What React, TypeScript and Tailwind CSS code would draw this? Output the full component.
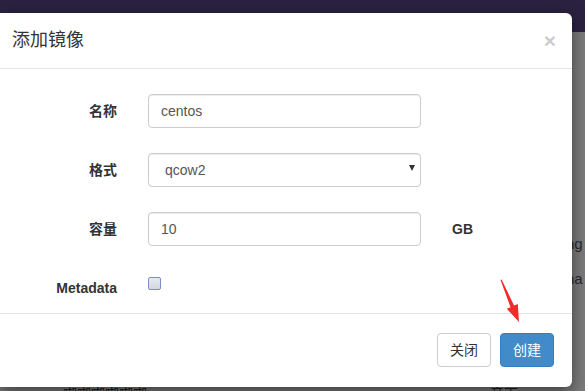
import { useState } from 'react';

const cjk = '"Liberation Sans", "Noto Sans CJK SC", sans-serif';

export default function App() {
  const [name, setName] = useState('centos');
  const [format, setFormat] = useState('qcow2');
  const [size, setSize] = useState('10');
  const [meta, setMeta] = useState(false);

  return (
    <div className="relative h-[391px] w-[585px] overflow-hidden bg-[#7b7b7b]" style={{ fontFamily: cjk }}>
      {/* page behind the backdrop */}
      <div className="h-[32px] bg-[#2a2240]" />
      <span className="absolute left-[566px] top-[233px] text-[15px] text-[#2a2a2a]">ng</span>
      <span className="absolute left-[566px] top-[268px] text-[15px] text-[#2a2a2a]">na</span>
      <span className="absolute left-[63px] top-[384px] text-[14px] text-[#1e1e1e]">嘲嘲嘲嘲嘲嘲</span>
      <span className="absolute left-[490px] top-[384px] text-[14px] text-[#1e1e1e]">音面</span>

      {/* dialog */}
      <div className="absolute left-0 top-[13px] flex h-[374px] w-[572px] flex-col rounded-r-md bg-white shadow-[0_5px_15px_rgba(0,0,0,0.5)]">
        <div className="flex h-[56px] items-center justify-between border-b border-[#e5e5e5] pl-[12px] pr-[16px]">
          <h4 className="text-[18px] font-normal text-[#333]">添加镜像</h4>
          <button className="text-[21px] font-bold leading-none text-black opacity-20">×</button>
        </div>

        <div className="flex flex-1 flex-col gap-[25px] pt-[25px] text-[14px]">
          <div className="flex h-[34px] items-center">
            <label className="w-[117px] text-right font-bold text-[#333]">名称</label>
            <input
              value={name}
              onChange={(e) => setName(e.target.value)}
              className="ml-[31px] h-[34px] w-[273px] rounded border border-[#ccc] px-[12px] text-[14px] text-[#555] shadow-[inset_0_1px_1px_rgba(0,0,0,0.075)] outline-none"
            />
          </div>
          <div className="flex h-[34px] items-center">
            <label className="w-[117px] text-right font-bold text-[#333]">格式</label>
            <div className="relative ml-[31px]">
              <select
                value={format}
                onChange={(e) => setFormat(e.target.value)}
                className="h-[34px] w-[273px] appearance-none rounded border border-[#ccc] bg-white px-[16px] text-[14px] text-[#555] shadow-[inset_0_1px_1px_rgba(0,0,0,0.075)] outline-none"
              >
                <option>qcow2</option>
                <option>raw</option>
                <option>iso</option>
              </select>
              <span className="pointer-events-none absolute right-[6px] top-[12px] h-0 w-0 border-x-[3.5px] border-t-[6px] border-x-transparent border-t-[#333]" />
            </div>
          </div>
          <div className="flex h-[34px] items-center">
            <label className="w-[117px] text-right font-bold text-[#333]">容量</label>
            <input
              value={size}
              onChange={(e) => setSize(e.target.value)}
              className="ml-[31px] h-[34px] w-[273px] rounded border border-[#ccc] px-[12px] text-[14px] text-[#555] shadow-[inset_0_1px_1px_rgba(0,0,0,0.075)] outline-none"
            />
            <span className="ml-[31px] font-bold text-[#333]">GB</span>
          </div>
          <div className="flex h-[26px] items-center">
            <label className="w-[117px] pt-[8px] text-right font-bold text-[#333]">Metadata</label>
            <button
              onClick={() => setMeta(!meta)}
              className="ml-[31px] -mt-[2px] flex h-[13px] w-[13px] items-center justify-center rounded-[2px] border border-[#7d8ccb] bg-gradient-to-b from-[#e8eaf0] to-[#d3d7e2] text-[10px] leading-none text-[#333]"
            >
              {meta ? '✓' : ''}
            </button>
          </div>
        </div>

        <div className="flex h-[74px] items-start justify-end gap-[9px] border-t border-[#e5e5e5] pr-[18px] pt-[19px]">
          <button className="h-[34px] w-[54px] rounded border border-[#ccc] bg-white text-[14px] text-[#333]">关闭</button>
          <button className="h-[34px] w-[54px] rounded border border-[#357ebd] bg-[#428bca] text-[14px] text-white">创建</button>
        </div>
      </div>

      {/* red pointer arrow */}
      <svg className="absolute left-[495px] top-[276px]" width="30" height="50" viewBox="0 0 30 50">
        <polygon points="5.5,4 6.6,3.6 19.1,29.6 22.8,28 24,46 11.8,32.8 15.5,31.2" fill="#f22b2b" />
      </svg>
    </div>
  );
}
